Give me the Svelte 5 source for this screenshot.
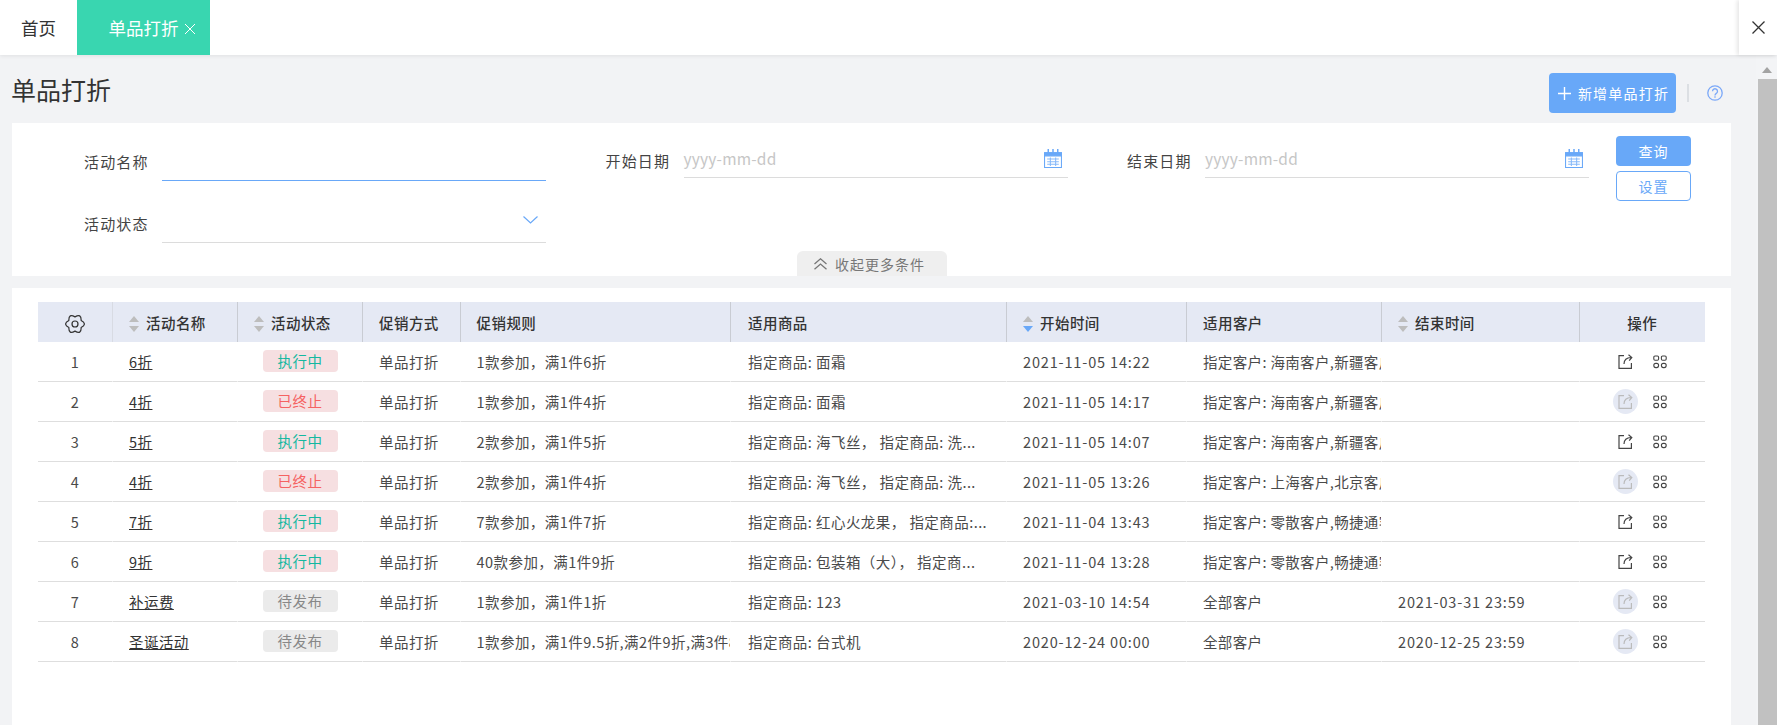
<script lang="ts">
  type Row = {
    name: string;
    status: "run" | "stop" | "wait";
    rule: string;
    goods: string;
    start: string;
    customer: string;
    end: string;
    disabled: boolean;
  };

  const statusText = { run: "执行中", stop: "已终止", wait: "待发布" };

  const rows: Row[] = [
    { name: "6折", status: "run", rule: "1款参加，满1件6折", goods: "指定商品: 面霜", start: "2021-11-05 14:22", customer: "指定客户: 海南客户,新疆客户,西藏客户", end: "", disabled: false },
    { name: "4折", status: "stop", rule: "1款参加，满1件4折", goods: "指定商品: 面霜", start: "2021-11-05 14:17", customer: "指定客户: 海南客户,新疆客户,西藏客户", end: "", disabled: true },
    { name: "5折", status: "run", rule: "2款参加，满1件5折", goods: "指定商品: 海飞丝， 指定商品: 洗...", start: "2021-11-05 14:07", customer: "指定客户: 海南客户,新疆客户,西藏客户", end: "", disabled: false },
    { name: "4折", status: "stop", rule: "2款参加，满1件4折", goods: "指定商品: 海飞丝， 指定商品: 洗...", start: "2021-11-05 13:26", customer: "指定客户: 上海客户,北京客户,天津客户", end: "", disabled: true },
    { name: "7折", status: "run", rule: "7款参加，满1件7折", goods: "指定商品: 红心火龙果， 指定商品:...", start: "2021-11-04 13:43", customer: "指定客户: 零散客户,畅捷通客户,其他", end: "", disabled: false },
    { name: "9折", status: "run", rule: "40款参加，满1件9折", goods: "指定商品: 包装箱（大）， 指定商...", start: "2021-11-04 13:28", customer: "指定客户: 零散客户,畅捷通客户,其他", end: "", disabled: false },
    { name: "补运费", status: "wait", rule: "1款参加，满1件1折", goods: "指定商品: 123", start: "2021-03-10 14:54", customer: "全部客户", end: "2021-03-31 23:59", disabled: true },
    { name: "圣诞活动", status: "wait", rule: "1款参加，满1件9.5折,满2件9折,满3件8折", goods: "指定商品: 台式机", start: "2020-12-24 00:00", customer: "全部客户", end: "2020-12-25 23:59", disabled: true },
  ];
</script>

{#snippet sorter(active = false)}
  <svg class="sorter" viewBox="0 0 10 16" width="10" height="16">
    <path d="M5 0 10 6H0Z" fill="#bdbdbd" />
    <path d="M0 10h10L5 16Z" fill={active ? "#69a8f8" : "#bdbdbd"} />
  </svg>
{/snippet}

{#snippet calendar()}
  <svg class="cal" viewBox="0 0 17 18" width="18" height="19" fill="none" stroke="#69a8f8">
    <path d="M.5 3.5h16v14H.5z" />
    <path d="M.5 3.5h16v3H.5z" fill="#69a8f8" />
    <path d="M4 0v4M8.500 0v4M13 0v4" stroke-width="1.4" />
    <path d="M3 9.500h11M3 12h11M3 14.500h11M6 8v8M11 8v8" stroke-width="1" opacity=".8" />
  </svg>
{/snippet}

<div class="page">
  <header class="tabs">
    <div class="tab">首页</div>
    <div class="tab active">
      单品打折
      <svg viewBox="0 0 12 12" width="12" height="12" stroke="#fff" fill="none"><path d="M1 1l10 10M11 1 1 11" /></svg>
    </div>
    <button class="close-all" aria-label="关闭">
      <svg viewBox="0 0 13 13" width="13" height="13" stroke="#333" stroke-width="1.3" fill="none"><path d="M.5.5l12 12M12.500.5l-12 12" /></svg>
    </button>
  </header>

  <div class="content">
    <main class="main">
      <div class="title-row">
        <h1>单品打折</h1>
        <div class="title-actions">
          <button class="btn-add">
            <svg viewBox="0 0 13 13" width="13" height="13" stroke="#fff" stroke-width="1.4"><path d="M6.500 0v13M0 6.500h13" /></svg>
            新增单品打折
          </button>
          <span class="divider"></span>
          <svg class="help" viewBox="0 0 16 16" width="16" height="16" fill="none" stroke="#7ba8f8" stroke-width="1.3">
            <circle cx="8" cy="8" r="7.200" />
            <path d="M5.500 6.300a2.500 2.500 0 1 1 3.800 2.100c-.9.600-1.300 1-1.300 2" />
            <path d="M8 11.300v1.500" />
          </svg>
        </div>
      </div>

      <section class="filter">
        <div class="filter-grid">
          <div class="field">
            <span class="label">活动名称</span>
            <div class="input focus"></div>
          </div>
          <div class="field date">
            <span class="label">开始日期</span>
            <div class="input"><span class="placeholder">yyyy-mm-dd</span>{@render calendar()}</div>
          </div>
          <div class="field date">
            <span class="label">结束日期</span>
            <div class="input"><span class="placeholder">yyyy-mm-dd</span>{@render calendar()}</div>
          </div>
          <div class="filter-btns">
            <button class="btn-query">查询</button>
            <button class="btn-reset">设置</button>
          </div>
          <div class="field">
            <span class="label">活动状态</span>
            <div class="input select">
              <svg viewBox="0 0 15 8" width="15" height="8" fill="none" stroke="#69a8f8" stroke-width="1.200"><path d="M.5.5l7 6.500 7-6.500" /></svg>
            </div>
          </div>
        </div>
        <div class="collapse">
          <svg viewBox="0 0 13 12" width="13" height="12" fill="none" stroke="#777" stroke-width="1.300"><path d="M.5 6 6.500.8l6 5.200M.5 11.300l6-5.200 6 5.200" /></svg>
          收起更多条件
        </div>
      </section>

      <section class="list">
        <table>
          <colgroup>
            <col style="width:75px" />
            <col style="width:125px" />
            <col style="width:125px" />
            <col style="width:97.5px" />
            <col style="width:270.5px" />
            <col style="width:276px" />
            <col style="width:180px" />
            <col style="width:195px" />
            <col style="width:197.5px" />
            <col />
          </colgroup>
          <thead>
            <tr>
              <th class="center">
                <svg class="gear" viewBox="0 0 18 18" width="20" height="20" fill="none" stroke="#333" stroke-width="1.100">
                  <path d="M14.540 5.800Q20.400 9 14.540 12.200 14.700 18.870 9 15.400 3.300 18.870 3.460 12.200-2.400 9 3.460 5.800 3.300-.87 9 2.600 14.700-.87 14.540 5.800Z" stroke-linejoin="round" />
                  <circle cx="9" cy="9" r="2.700" />
                </svg>
              </th>
              <th>{@render sorter()}活动名称</th>
              <th>{@render sorter()}活动状态</th>
              <th>促销方式</th>
              <th>促销规则</th>
              <th class="goods">适用商品</th>
              <th>{@render sorter(true)}开始时间</th>
              <th>适用客户</th>
              <th>{@render sorter()}结束时间</th>
              <th class="center">操作</th>
            </tr>
          </thead>
          <tbody>
            {#each rows as row, i}
              <tr>
                <td class="center">{i + 1}</td>
                <td><span class="link">{row.name}</span></td>
                <td class="center"><span class="tag {row.status}">{statusText[row.status]}</span></td>
                <td>单品打折</td>
                <td>{row.rule}</td>
                <td class="goods">{row.goods}</td>
                <td class="time">{row.start}</td>
                <td class="customer">{row.customer}</td>
                <td class="time">{row.end}</td>
                <td>
                  <div class="ops">
                    <span class="op-share" class:disabled={row.disabled}>
                      <svg viewBox="0 0 15 15" width="15" height="15" fill="none" stroke="currentColor" stroke-width="1.200">
                        <path d="M6 1.600H1v12.800h12.400V9" />
                        <path d="M6 10c0-4 2.500-6.500 7-6.500M10.500.8l3.300 2.700-2.600 3.200" />
                      </svg>
                    </span>
                    <svg class="op-grid" viewBox="0 0 14 14" width="14" height="14" fill="none" stroke="#444" stroke-width="1.100">
                      <rect x=".8" y="1" width="4.800" height="4.200" rx="1.200" />
                      <rect x="8.400" y="1" width="4.800" height="4.200" rx="1.200" />
                      <rect x=".8" y="8.400" width="4.800" height="4.200" rx="2" />
                      <rect x="8.400" y="8.400" width="4.800" height="4.200" rx="2" />
                    </svg>
                  </div>
                </td>
              </tr>
            {/each}
          </tbody>
        </table>
      </section>
    </main>

    <div class="scrollbar">
      <span class="arrow"></span>
      <div class="thumb"></div>
    </div>
  </div>
</div>

<style>
  :global(body) {
    margin: 0;
    background: #f2f3f5;
    overflow: hidden;
    font-family: "Noto Sans CJK SC", "Open Sans", sans-serif;
  }

  .page {
    height: 100vh;
    display: flex;
    flex-direction: column;
    overflow: hidden;
    color: #333;
  }

  .tabs {
    height: 55px;
    flex: none;
    display: flex;
    background: #fff;
    box-shadow: 0 1px 4px rgba(0, 0, 0, 0.08);
    position: relative;
    z-index: 1;
  }

  .tab {
    width: 77px;
    display: flex;
    align-items: center;
    justify-content: center;
    font-size: 17.5px;
    color: #333;
  }

  .tab.active {
    width: 133px;
    background: #39d6b0;
    color: #fff;
    padding-left: 17px;
    gap: 5px;
    box-sizing: border-box;
  }

  .tab.active svg {
    margin-top: 3px;
  }

  .close-all {
    margin-left: auto;
    width: 38px;
    border: none;
    background: #fff;
    padding: 0;
    box-shadow: -2px 0 4px rgba(0, 0, 0, 0.1);
    display: flex;
    align-items: center;
    justify-content: center;
  }

  .content {
    flex: 1;
    display: flex;
    min-height: 0;
  }

  .main {
    flex: 1;
    min-width: 0;
    padding: 0 25px 0 12px;
    display: flex;
    flex-direction: column;
  }

  .title-row {
    height: 68px;
    flex: none;
    box-sizing: border-box;
    padding: 18px 8px 10px 0;
    display: flex;
    align-items: center;
    justify-content: space-between;
  }

  h1 {
    margin: -8px 0 0 -1px;
    font-size: 25px;
    font-weight: 400;
    color: #333;
  }

  .title-actions {
    display: flex;
    align-items: center;
  }

  .btn-add {
    width: 127px;
    height: 40px;
    border: none;
    border-radius: 4px;
    background: #68a8f8;
    color: #fff;
    font: inherit;
    font-size: 14px;
    letter-spacing: 1.2px;
    display: flex;
    align-items: center;
    justify-content: center;
    gap: 7px;
    padding: 0 0 0 2px;
    white-space: nowrap;
  }

  .divider {
    width: 2px;
    height: 18px;
    background: #dcdfe3;
    margin: 0 18px 0 11px;
  }

  .filter {
    height: 153px;
    flex: none;
    background: #fff;
    display: flex;
    flex-direction: column;
  }

  .filter-grid {
    display: grid;
    grid-template-columns: repeat(3, 521.5px) 1fr;
    grid-template-rows: 45px 39px;
    row-gap: 23px;
    padding-top: 13px;
  }

  .field {
    display: flex;
    align-items: center;
    gap: 13.5px;
    align-self: end;
    height: 39px;
  }

  .field.date {
    align-self: start;
    margin-top: 6px;
    height: 36px;
  }

  .label {
    width: 136.5px;
    flex: none;
    text-align: right;
    font-size: 15px;
    letter-spacing: 1.1px;
    color: #444;
    line-height: 1;
  }

  .input {
    width: 384px;
    flex: none;
    height: 100%;
    box-sizing: border-box;
    border-bottom: 1px solid #dcdcdc;
    display: flex;
    align-items: center;
    justify-content: space-between;
    padding-right: 6px;
  }

  .input.focus {
    border-bottom-color: #69a8f8;
  }

  .input.select {
    justify-content: flex-end;
    padding: 0 8px 6px 0;
  }

  .placeholder {
    font-size: 15.5px;
    color: #c6c6c6;
    letter-spacing: 0.2px;
    margin-top: -4px;
  }

  .cal {
    margin-top: -3px;
  }

  .filter-btns {
    grid-column: 4;
    grid-row: 1 / span 2;
    margin-left: 39.5px;
    display: flex;
    flex-direction: column;
    gap: 5px;
  }

  .filter-btns button {
    width: 75px;
    height: 30px;
    border-radius: 4px;
    font: inherit;
    font-size: 14px;
    letter-spacing: 1px;
    padding: 0;
  }

  .btn-query {
    background: #68a8f8;
    color: #fff;
    border: none;
  }

  .btn-reset {
    background: #fff;
    color: #69a8f8;
    border: 1px solid #69a8f8;
  }

  .collapse {
    margin-top: auto;
    align-self: center;
    width: 150px;
    height: 25px;
    box-sizing: border-box;
    padding-right: 4px;
    background: #efefef;
    border-radius: 6px 6px 0 0;
    display: flex;
    align-items: center;
    justify-content: center;
    gap: 8px;
    font-size: 14px;
    letter-spacing: 1px;
    color: #777;
  }

  .list {
    flex: 1;
    margin-top: 12px;
    background: #fff;
    padding: 14px 26px;
  }

  table {
    width: 100%;
    table-layout: fixed;
    border-collapse: separate;
    border-spacing: 0;
    font-size: 14.500px;
    letter-spacing: 0.45px;
  }

  th {
    height: 40px;
    padding: 0 0 0 16px;
    box-sizing: border-box;
    background: #e5e9f4;
    border-right: 1px solid #c9ccd3;
    text-align: left;
    font-weight: 500;
    color: #333;
    white-space: nowrap;
  }

  th:first-child {
    border-right-color: #d8dbe3;
  }

  th:last-child {
    border-right: none;
  }

  th.center,
  td.center {
    padding: 0;
    text-align: center;
  }

  th.goods,
  td.goods {
    padding-left: 17px;
  }

  .sorter {
    vertical-align: -3px;
    margin-right: 7px;
  }

  .gear {
    vertical-align: middle;
  }

  td {
    height: 40px;
    padding: 0 0 0 16px;
    box-sizing: border-box;
    border-bottom: 1px solid #dedede;
    border-right: 1px solid #fff;
    color: #4a4a4a;
    white-space: nowrap;
    overflow: hidden;
  }

  td:last-child {
    border-right: none;
    padding: 0 4px 0 0;
  }

  td.time {
    letter-spacing: 0.85px;
  }

  td.customer {
    letter-spacing: 0.35px;
  }

  .link {
    color: #333;
    text-decoration: underline;
  }

  .tag {
    display: inline-block;
    width: 75px;
    height: 22px;
    line-height: 22px;
    border-radius: 4px;
    text-align: center;
    vertical-align: middle;
    margin-bottom: 2px;
  }

  .tag.run {
    background: #f6dfe1;
    color: #14b8a0;
  }

  .tag.stop {
    background: #f6dfe1;
    color: #f56262;
  }

  .tag.wait {
    background: #ebebeb;
    color: #888;
  }

  .ops {
    display: flex;
    align-items: center;
    justify-content: center;
    gap: 15px;
  }

  .op-share {
    width: 25px;
    height: 25px;
    border-radius: 50%;
    display: flex;
    align-items: center;
    justify-content: center;
    color: #444;
  }

  .op-share.disabled {
    background: #e5e9f4;
    color: #bbb;
  }

  .scrollbar {
    width: 21px;
    flex: none;
    background: #f3f4f6;
    display: flex;
    flex-direction: column;
    align-items: center;
    padding-top: 12px;
    box-sizing: border-box;
  }

  .arrow {
    width: 0;
    height: 0;
    border-left: 5px solid transparent;
    border-right: 5px solid transparent;
    border-bottom: 6px solid #a3a3a3;
  }

  .thumb {
    margin-top: 6px;
    flex: 1;
    align-self: flex-end;
    width: 19px;
    background: #c1c1c1;
  }
</style>
